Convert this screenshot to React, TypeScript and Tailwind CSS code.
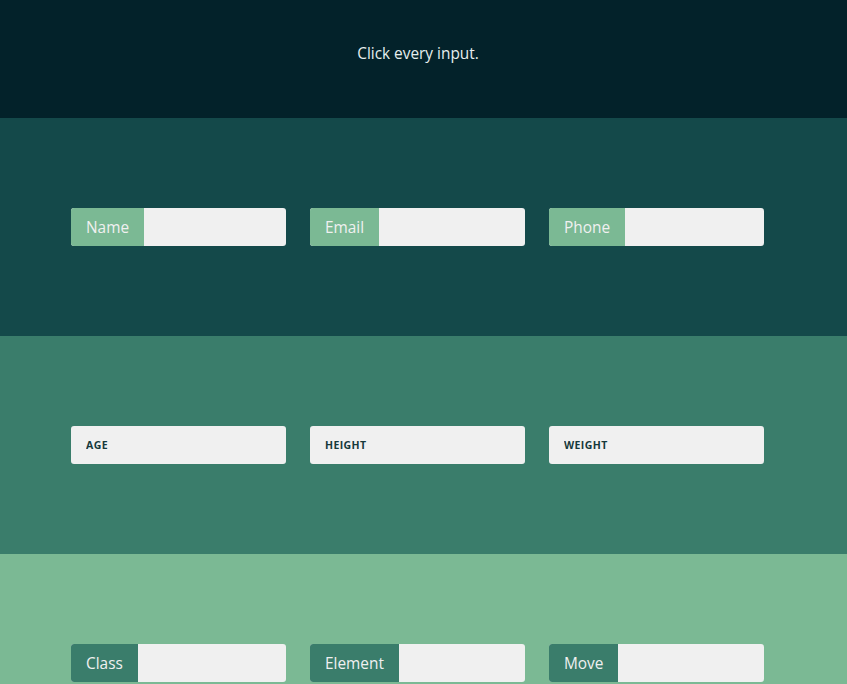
import React from "react";

const font = { fontFamily: '"Open Sans", "Noto Sans", sans-serif' };

function LabeledInput({ label, labelBg }: { label: string; labelBg: string }) {
  return (
    <div className="flex h-[38px] w-[215px] overflow-hidden rounded-[3px] bg-[#f0f0f0]">
      <label className={`flex items-center px-[15px] pt-[2px] text-[15.4px] text-[#f0f0f0] ${labelBg}`}>{label}</label>
      <input className="min-w-0 flex-1 bg-transparent outline-none" />
    </div>
  );
}

function PlaceholderInput({ ph }: { ph: string }) {
  return (
    <input
      placeholder={ph}
      className="h-[38px] w-[215px] rounded-[3px] bg-[#f0f0f0] px-[15px] text-[10.5px] font-bold uppercase tracking-[0.4px] text-[#16393b] outline-none placeholder:text-[#16393b]"
      style={font}
    />
  );
}

export default function App() {
  return (
    <div style={font} className="w-full">
      <div className="flex h-[118px] items-center justify-center bg-[#03222a] pb-[10px] pr-[11px] text-[15.4px] text-[#e6eeee]">
        Click every input.
      </div>
      <div className="flex h-[218px] items-center gap-[24px] bg-[#14494a] pl-[71px]">
        <LabeledInput label="Name" labelBg="bg-[#7bb994]" />
        <LabeledInput label="Email" labelBg="bg-[#7bb994]" />
        <LabeledInput label="Phone" labelBg="bg-[#7bb994]" />
      </div>
      <div className="flex h-[218px] items-center gap-[24px] bg-[#3a7d6b] pl-[71px]">
        <PlaceholderInput ph="Age" />
        <PlaceholderInput ph="Height" />
        <PlaceholderInput ph="Weight" />
      </div>
      <div className="flex h-[218px] items-center gap-[24px] bg-[#7bb994] pl-[71px]">
        <LabeledInput label="Class" labelBg="bg-[#3a7d6b]" />
        <LabeledInput label="Element" labelBg="bg-[#3a7d6b]" />
        <LabeledInput label="Move" labelBg="bg-[#3a7d6b]" />
      </div>
    </div>
  );
}
